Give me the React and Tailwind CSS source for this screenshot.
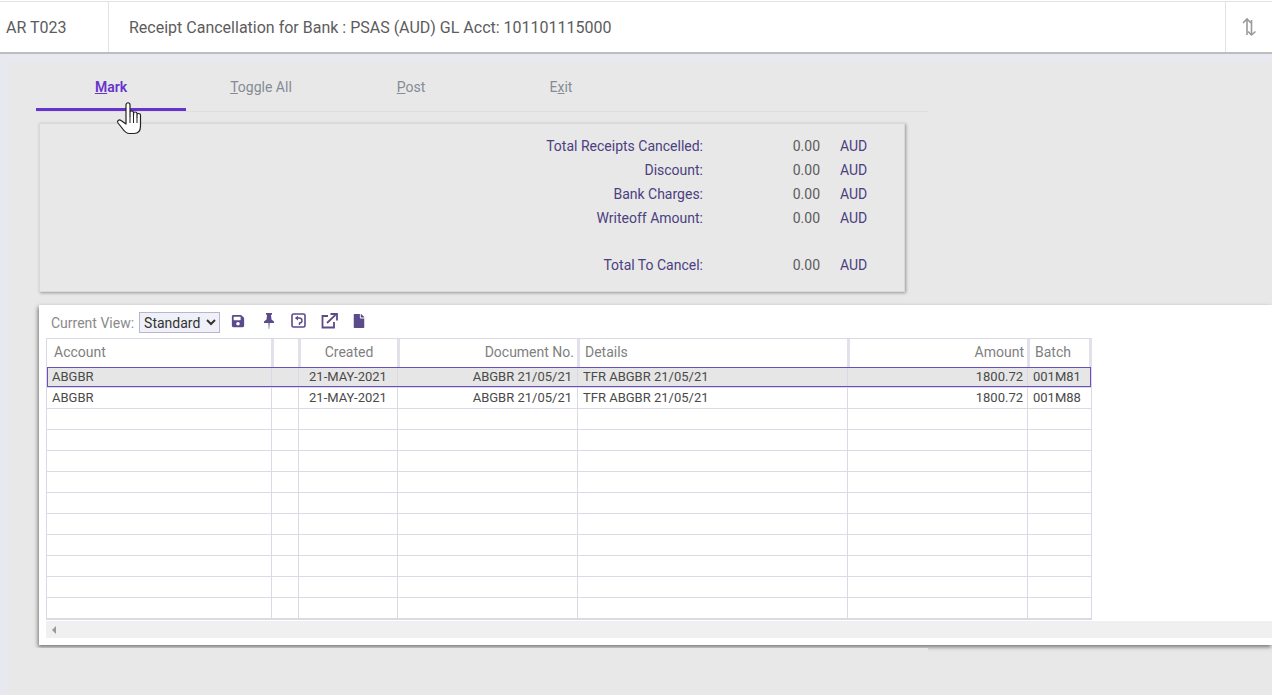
import React from 'react'
import { FaSave, FaFile } from 'react-icons/fa'

const tabs = [
    ['M', 'ark'],
    ['T', 'oggle All'],
    ['P', 'ost'],
    ['E', 'xit', 'x'],
]

const totals = [
    ['Total Receipts Cancelled:', '0.00', 'AUD'],
    ['Discount:', '0.00', 'AUD'],
    ['Bank Charges:', '0.00', 'AUD'],
    ['Writeoff Amount:', '0.00', 'AUD'],
]

const columns = 'grid grid-cols-[225px_27px_99px_180px_270px_180px_64px]'

const rows = [
    ['ABGBR', '', '21-MAY-2021', 'ABGBR 21/05/21', 'TFR ABGBR 21/05/21', '1800.72', '001M81'],
    ['ABGBR', '', '21-MAY-2021', 'ABGBR 21/05/21', 'TFR ABGBR 21/05/21', '1800.72', '001M88'],
    ...Array.from({ length: 10 }, () => ['', '', '', '', '', '', '']),
]

const cellAlign = ['pl-[5px]', '', 'text-center', 'text-right pr-[5px]', 'pl-[5px]', 'text-right pr-[4px]', 'pl-[5px]']

const headers = [
    ['Account', 'pl-[7px] border-r'],
    ['', 'border-l-[2px] border-r'],
    ['Created', 'text-center border-l-[2px] border-r'],
    ['Document No.', 'text-right pr-[3px] border-l-[2px] border-r'],
    ['Details', 'pl-[5px] border-l-[2px] border-r'],
    ['Amount', 'text-right pr-[3px] border-l-[2px] border-r'],
    ['Batch', 'pl-[5px] border-l-[2px] border-r-[3px]'],
]

const HandCursor = () => (
    <svg className="absolute left-[116px] top-[100px]" width="27" height="34" viewBox="0 0 27 34">
        <path
            d="M10 23 L10 4 C10 1 14 1 14 4 L14 15 L14 11.5 C14 9.5 17.5 9.5 17.5 11.5 L17.5 15 L17.5 12.5 C17.5 10.5 21 10.5 21 12.5 L21 16 L21 14 C21 12 24.5 12 24.5 14 L24.5 25 C24.5 30 22 32.5 18 32.5 L13.5 32.5 C10 32.5 8 30 6 27 L2 22 C0.5 20 3 18 5 19.5 Z"
            fill="#fff"
            stroke="#222"
            strokeWidth="1.2"
            strokeLinejoin="round"
        />
        <path d="M14 15 L14 22 M17.5 15 L17.5 22 M21 16 L21 22" stroke="#222" strokeWidth="1" fill="none" />
    </svg>
)

const ToolbarIcons = () => (
    <div className="flex items-center text-[#5b4b8a] ml-[11px] mb-[4px]">
        <FaSave size={14} />
        <svg className="ml-[19px] mt-[1px]" width="10" height="16" viewBox="0 0 10 16" fill="currentColor">
            <path d="M2 0 L8 0 L8 1.5 L7 2 L7.5 6.5 L10 8.5 L10 10 L5.6 10 L5.2 16 L4.8 16 L4.4 10 L0 10 L0 8.5 L2.5 6.5 L3 2 L2 1.5 Z" />
        </svg>
        <svg className="ml-[17px]" width="15" height="15" viewBox="0 0 15 15" fill="none" stroke="currentColor">
            <rect x="1" y="1" width="13" height="13" rx="1.5" strokeWidth="1.6" />
            <path d="M6.5 5 L8 5 C10 5 11 6 11 7.5 C11 9 10 10 8.5 10 L8.5 12" strokeWidth="1.4" />
            <path d="M7 2.8 L7 7.4 L3.8 5 Z" fill="currentColor" stroke="none" />
        </svg>
        <svg className="ml-[15px]" width="17" height="16" viewBox="0 0 17 16" fill="none" stroke="currentColor" strokeWidth="1.8">
            <path d="M7 3 L1.5 3 L1.5 14.5 L13 14.5 L13 9" />
            <path d="M6 10 L14.5 1.8 M9.5 1 L16 1 L16 7.5" />
        </svg>
        <FaFile size={14} className="ml-[14px]" />
    </div>
)

export default function App() {
    return (
        <div className="h-[695px] overflow-hidden bg-[#e8e8f0] font-['Roboto',sans-serif] relative border-t border-white">
            {/* top bar */}
            <div className="flex h-[53px] bg-white border-t border-t-[#e3e3e3] border-b-2 border-b-[#bdbdbd] text-[#5c5c5c] text-[16px]">
                <div className="w-[109px] flex items-center pl-[6px] pt-[1px] border-r border-[#e3e3e3]">AR T023</div>
                <div className="flex-1 flex items-center pl-[20px] pt-[1px]">
                    Receipt Cancellation for Bank : PSAS (AUD) GL Acct: 101101115000
                </div>
                <div className="w-[47px] flex items-center justify-center border-l border-[#e3e3e3] text-[#9a9a9a]">
                    <svg width="16" height="20" viewBox="0 0 16 20" fill="none" stroke="currentColor" strokeWidth="1.6">
                        <path d="M6 18 L6 2 M2 6 L6 2 L10 6" />
                        <path d="M10.5 3 L10.5 18 M7 14.5 L10.5 18 L14.5 14.5" />
                    </svg>
                </div>
            </div>

            {/* page */}
            <div className="ml-[8px] mt-[8px] h-[633px] bg-[#e8e8e8]">
                <div className="ml-[28px] w-[892px] h-[50px] flex border-b border-[#dedede]">
                    {tabs.map(([key, rest, inner], index) => (
                        <div
                            key={index}
                            className={`w-[150px] h-[49px] flex items-center justify-center text-[14px] ${index === 0 ? 'pt-[4px] border-b-[3px] border-[#6633cc] text-[#6633cc] font-semibold' : 'pt-[2px] text-[#858b95]'}`}
                        >
                            {inner ? (
                                <span>E<u>x</u>it</span>
                            ) : (
                                <span><u>{key}</u>{rest}</span>
                            )}
                        </div>
                    ))}
                </div>

                {/* totals */}
                <div className="ml-[31px] mt-[11px] w-[866px] h-[169px] pt-[10px] border border-[#d9d9d9] shadow-[1px_1px_3px_rgba(0,0,0,0.35)] text-[14px]">
                    {totals.map((row) => (
                        <div key={row[0]} className="flex h-[24px] items-center">
                            <div className="w-[663px] text-right text-[#4b4080]">{row[0]}</div>
                            <div className="w-[117px] text-right text-[#5c5c5c]">{row[1]}</div>
                            <div className="ml-[20px] text-[#4b4080]">{row[2]}</div>
                        </div>
                    ))}
                    <div className="flex h-[24px] items-center mt-[23px]">
                        <div className="w-[663px] text-right text-[#4b4080]">Total To Cancel:</div>
                        <div className="w-[117px] text-right text-[#5c5c5c]">0.00</div>
                        <div className="ml-[20px] text-[#4b4080]">AUD</div>
                    </div>
                </div>

                {/* grid panel */}
                <div className="relative ml-[31px] mt-[13px] h-[340px] bg-white shadow-[-1px_2px_4px_rgba(0,0,0,0.5)]">
                    <div className="flex items-center h-[33px] pl-[12px] pt-[2px]">
                        <span className="text-[14px] text-[#8a8a8a] pt-[2px]">Current View:</span>
                        <select className="ml-[5px] w-[81px] h-[21px] bg-[#f0f0f8] border border-[#b9b5d0] text-[14px] text-[#333]">
                            <option>Standard</option>
                        </select>
                        <ToolbarIcons />
                    </div>
                    <div className="ml-[7px] w-[1046px] border border-[#dcd9e4] border-b-[2px]">
                        <div className={`${columns} h-[28px] text-[14px] text-[#808080]`}>
                            {headers.map(([label, align], index) => (
                                <div key={index} className={`leading-[27px] border-[#e2e0ea] ${align}`}>{label}</div>
                            ))}
                        </div>
                        {rows.map((row, rowIndex) => (
                            <div
                                key={rowIndex}
                                className={`${columns} text-[13px] text-[#4a4a4a] leading-[20px] ${rowIndex === 0 ? 'h-[20px] bg-[#e6e6e6] outline outline-1 -outline-offset-1 outline-[#6a4fc0]' : 'h-[21px] bg-white border-t border-[#dcd9e4]'}`}
                            >
                                {row.map((cell, cellIndex) => (
                                    <div key={cellIndex} className={`border-r border-[#dcd9e4] ${cellAlign[cellIndex]}`}>{cell}</div>
                                ))}
                            </div>
                        ))}
                    </div>
                    <div className="ml-[7px] mt-[1px] h-[17px] bg-[#f0f0f0] flex items-center pl-[6px]">
                        <div className="w-0 h-0 border-y-[4px] border-y-transparent border-r-[4px] border-r-[#999]"></div>
                    </div>
                    {/* the shadow stops short under the left part */}
                    <div className="absolute left-[-4px] top-[343px] w-[893px] h-[8px] bg-[#e8e8e8]"></div>
                </div>
            </div>
            <HandCursor />
        </div>
    )
}
